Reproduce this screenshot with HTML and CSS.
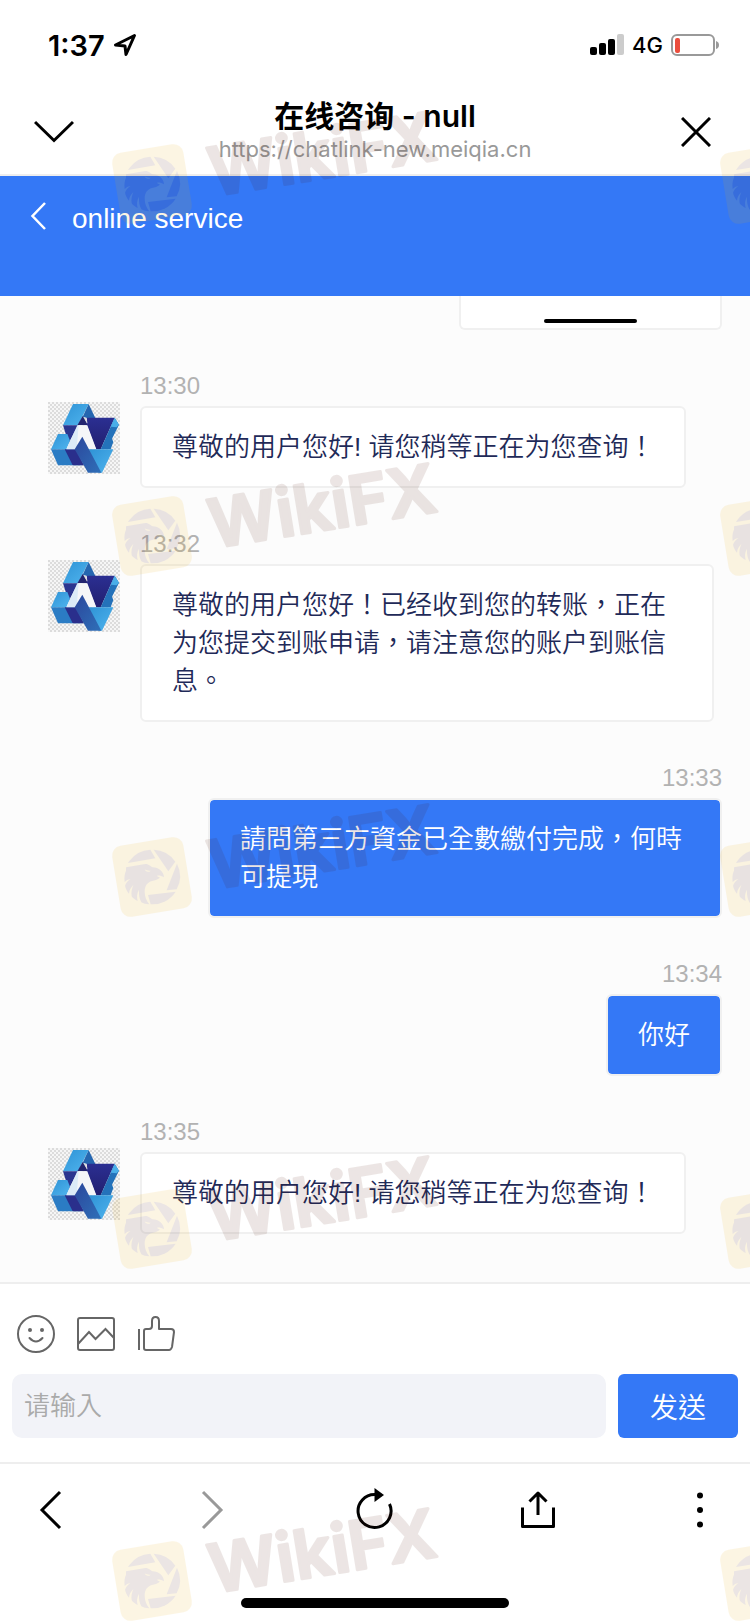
FILE: index.html
```
<!DOCTYPE html>
<html lang="zh-TW">
<head>
    <meta charset="UTF-8">
    <meta name="viewport" content="width=device-width, initial-scale=1.0">
    <title>在线咨询 - null</title>
    <link rel="stylesheet" href="styles.css">
</head>
<body>
    <!-- shared drawings -->
    <svg class="defs" width="0" height="0" aria-hidden="true">
        <defs>
            <pattern id="checker" width="12" height="12" patternUnits="userSpaceOnUse">
                <rect width="12" height="12" fill="#f6f6f6"/>
                <path d="M0 0h6v6H0zM6 6h6v6H6z" fill="#dcdcdc"/>
            </pattern>
            <linearGradient id="sky" x1="0" y1="0" x2="1" y2="1">
                <stop offset="0" stop-color="#2f93d6"/>
                <stop offset="1" stop-color="#4fb4ee"/>
            </linearGradient>
            <linearGradient id="navy" x1="0" y1="0" x2="0" y2="1">
                <stop offset="0" stop-color="#2b2f92"/>
                <stop offset="1" stop-color="#221f70"/>
            </linearGradient>
            <linearGradient id="royal" x1="0" y1="0" x2="1" y2="1">
                <stop offset="0" stop-color="#2b479c"/>
                <stop offset="1" stop-color="#2f6fb8"/>
            </linearGradient>
        </defs>
        <symbol id="avatar" viewBox="0 0 216 216">
            <rect width="216" height="216" fill="url(#checker)"/>
            <path d="M75 6h47L90 70H45z" fill="url(#sky)"/>
            <path d="M122 6l20 42h-24l-14-4z" fill="#2566b0"/>
            <path d="M104 42l16 28H88z" fill="#23246f"/>
            <path d="M116 47h84l-42 95h-14l-28-72 2-8z" fill="url(#navy)"/>
            <path d="M200 47l13 21-21 42 4 10-8 22h-30z" fill="#2472ba"/>
            <path d="M200 47l13 21-7 8-18-2z" fill="#4aaee8"/>
            <path d="M45 70h45l-28 54z" fill="#2b358f"/>
            <path d="M30 96h28l8 20-11 26H9z" fill="url(#sky)"/>
            <path d="M9 142h70l24 48H30z" fill="#2b7cc4"/>
            <path d="M50 142h34l24 48H74z" fill="#2a2f8c"/>
            <path d="M88 70h16l4 30-28 42H55z" fill="#dcebf7"/>
            <path d="M92 70h26l27 72h-24l-18-38-16 24z" fill="#f5f6f8"/>
            <path d="M122 142h74l-34 70h-10z" fill="url(#sky)"/>
            <path d="M103 104l57 108h-40L80 142z" fill="url(#royal)"/>
        </symbol>
        <symbol id="eagle" viewBox="0 0 72 72" overflow="visible">
            <g opacity=".11">
                <rect width="72" height="72" rx="10" fill="#ecad0a" transform="rotate(-9.3 36 36)"/>
                <g transform="translate(36 36) scale(.333) translate(-132 -136)" fill="#501e14">
                    <path d="M64 88A83 83 0 0 1 127 54l15 26-82 14z"/>
                    <path d="M137 54A83 83 0 0 1 202 90l-21 29z"/>
                    <path d="M207 96a83 83 0 0 1-1 77l-30 3z"/>
                    <path d="M120 190l83-10a83 83 0 0 1-75 38z"/>
                    <path d="M54 107l58-10c12 0 16 8 22 10 18 0 34 14 34 30-10-7-24-6-20-3l8 4c-8 6-16 8-24 10-14 4-22 14-22 32 0 16 6 28 14 38-10 0-18-2-24-6-6-12-8-22-7-38-7 12-7 22-4 34-8-4-14-8-18-14-2-12 0-22 5-34-9 9-12 16-13 26-7-8-10-15-12-24 3-8 8-14 16-20-8 2-12 4-17 9-2-14 0-26 4-34zM110 113c2 8 12 10 18 4-6 1-12 0-18-4z" fill-rule="evenodd"/>
                </g>
            </g>
        </symbol>
    </svg>

    <header class="top">
        <div class="status">
            <div class="status-left">
                <span class="clock">1:37</span>
                <svg width="24" height="24" viewBox="0 0 24 24" fill="none" stroke="#000" stroke-width="3" stroke-linejoin="round"><path d="M21.500 2.500L2.500 12l9.500 1 1 8.500z"/></svg>
            </div>
            <div class="status-right">
                <svg width="34" height="22" viewBox="0 0 34 22">
                    <rect x="0" y="13" width="7" height="8" rx="2"/>
                    <rect x="9" y="9" width="7" height="12" rx="2"/>
                    <rect x="18" y="5" width="7" height="16" rx="2"/>
                    <rect x="27" y="0" width="7" height="21" rx="2" fill="#ccc"/>
                </svg>
                <span class="network">4G</span>
                <svg width="48" height="24" viewBox="0 0 48 24">
                    <rect x="1" y="2" width="42" height="20" rx="5" fill="none" stroke="#999" stroke-width="2"/>
                    <rect x="4" y="5" width="5" height="15" rx="2" fill="#eb4d3d"/>
                    <path d="M45 8v8q3-1 3-4t-3-4z" fill="#999"/>
                </svg>
            </div>
        </div>
        <div class="titlebar">
            <button class="icon-btn" aria-label="Collapse">
                <svg width="40" height="24" viewBox="0 0 40 24" fill="none" stroke="#000" stroke-width="3"><path d="M1 2l19 18.500L39 2"/></svg>
            </button>
            <div class="titles">
                <h1 lang="zh-CN">在线咨询 - null</h1>
                <p>https://chatlink-new.meiqia.cn</p>
            </div>
            <button class="icon-btn" aria-label="Close">
                <svg width="30" height="30" viewBox="0 0 30 30" fill="none" stroke="#000" stroke-width="3"><path d="M1 1l28 28M29 1L1 29"/></svg>
            </button>
        </div>
    </header>

    <div class="service">
        <a href="#back" aria-label="Back">
            <svg width="16" height="28" viewBox="0 0 16 28" fill="none" stroke="#fff" stroke-width="2.500"><path d="M15 1L2.500 14 15 27"/></svg>
        </a>
        <h2>online service</h2>
    </div>

    <main class="chat">
        <div class="photo"><span></span></div>

        <section class="message">
            <time>13:30</time>
            <div class="row">
                <svg class="avatar"><use href="#avatar"/></svg>
                <p class="bubble">尊敬的用户您好! 请您稍等正在为您查询！</p>
            </div>
        </section>
        <section class="message">
            <time>13:32</time>
            <div class="row">
                <svg class="avatar"><use href="#avatar"/></svg>
                <p class="bubble">尊敬的用户您好！已经收到您的转账，正在为您提交到账申请，请注意您的账户到账信息。</p>
            </div>
        </section>
        <section class="message mine">
            <time>13:33</time>
            <div class="row">
                <p class="bubble">請問第三方資金已全數繳付完成，何時可提現</p>
            </div>
        </section>
        <section class="message mine">
            <time>13:34</time>
            <div class="row">
                <p class="bubble">你好</p>
            </div>
        </section>
        <section class="message">
            <time>13:35</time>
            <div class="row">
                <svg class="avatar"><use href="#avatar"/></svg>
                <p class="bubble">尊敬的用户您好! 请您稍等正在为您查询！</p>
            </div>
        </section>
    </main>

    <form class="composer">
        <div class="tools">
            <button type="button" aria-label="Emoji">
                <svg width="40" height="40" viewBox="0 0 40 40" fill="none" stroke="#666" stroke-width="2">
                    <circle cx="20" cy="20" r="18"/>
                    <path d="M13.500 24q6.500 7 13 0" stroke-linecap="round"/>
                    <circle cx="14" cy="16" r="2" fill="#666" stroke="none"/>
                    <circle cx="26" cy="16" r="2" fill="#666" stroke="none"/>
                </svg>
            </button>
            <button type="button" aria-label="Picture">
                <svg width="40" height="40" viewBox="0 0 40 40" fill="none" stroke="#666" stroke-width="2">
                    <rect x="2" y="4" width="36" height="32" rx="2"/>
                    <path d="M2 30l11-12 6.500 7L29.500 15l8.500 9"/>
                </svg>
            </button>
            <button type="button" aria-label="Like">
                <svg width="40" height="40" viewBox="0 0 40 40" fill="none" stroke="#666" stroke-width="2" stroke-linejoin="round">
                    <path d="M3 15v21"/>
                    <path d="M8 34V17q0-2 2-2h3q3 0 3-3V7q0-4 3.500-4T23 7v8h12q3 0 3 3l-2 15q-1 3-3 3H10q-2 0-2-2z"/>
                </svg>
            </button>
        </div>
        <div class="entry">
            <input type="text" placeholder="请输入" aria-label="请输入">
            <button type="submit" class="send">发送</button>
        </div>
    </form>

    <nav class="toolbar">
        <div class="toolbar-buttons">
            <button aria-label="Back"><svg width="40" height="40" viewBox="0 0 40 40" fill="none" stroke="#000" stroke-width="3"><path d="M30 2L12 20l18 18"/></svg></button>
            <button aria-label="Forward"><svg width="40" height="40" viewBox="0 0 40 40" fill="none" stroke="#999" stroke-width="3"><path d="M10 2l18 18-18 18"/></svg></button>
            <button aria-label="Reload"><svg width="40" height="40" viewBox="0 0 40 40" fill="none" stroke="#000" stroke-width="3"><path d="M20 4.500A16.500 16.500 0 1 0 34.500 14"/><path d="M19.500-2l9.500 7L19.500 12z" fill="#000" stroke="none"/></svg></button>
            <button aria-label="Share"><svg width="40" height="40" viewBox="0 0 40 40" fill="none" stroke="#000" stroke-width="3"><path d="M4.500 17.500v19h31v-19M20 25V3M11.500 11.500L20 3l8.500 8.500" stroke-linejoin="round"/></svg></button>
            <button aria-label="More"><svg width="40" height="40" viewBox="0 0 40 40"><circle cx="20" cy="5.500" r="3"/><circle cx="20" cy="20" r="3"/><circle cx="20" cy="34.500" r="3"/></svg></button>
        </div>
        <div class="home-bar"></div>
    </nav>

    <!-- watermark layer, two marks on each line -->
    <div class="watermarks" aria-hidden="true">
        <svg class="mark m1"><use href="#eagle" width="72" height="72"/><text x="94" y="58" transform="rotate(-9.3 36 36)">WikiFX</text></svg>
        <svg class="mark m2"><use href="#eagle" width="72" height="72"/><text x="94" y="58" transform="rotate(-9.3 36 36)">WikiFX</text></svg>
        <svg class="mark m3"><use href="#eagle" width="72" height="72"/><text x="94" y="58" transform="rotate(-9.3 36 36)">WikiFX</text></svg>
        <svg class="mark m4"><use href="#eagle" width="72" height="72"/><text x="94" y="58" transform="rotate(-9.3 36 36)">WikiFX</text></svg>
        <svg class="mark m5"><use href="#eagle" width="72" height="72"/><text x="94" y="58" transform="rotate(-9.3 36 36)">WikiFX</text></svg>
        <svg class="mark next m1"><use href="#eagle" width="72" height="72"/></svg>
        <svg class="mark next m2"><use href="#eagle" width="72" height="72"/></svg>
        <svg class="mark next m3"><use href="#eagle" width="72" height="72"/></svg>
        <svg class="mark next m4"><use href="#eagle" width="72" height="72"/></svg>
        <svg class="mark next m5"><use href="#eagle" width="72" height="72"/></svg>
    </div>
</body>
</html>
```
FILE: styles.css
```
* {
    margin: 0;
    padding: 0;
    box-sizing: border-box;
}

body {
    position: relative;
    min-height: 100vh;
    display: flex;
    flex-direction: column;
    overflow-x: hidden;
    background: #fff;
    font-family: "Liberation Sans", "Noto Sans CJK TC", sans-serif;
}

button {
    border: none;
    background: none;
    font-family: inherit;
    cursor: pointer;
}

svg {
    display: block;
}

.defs {
    position: absolute;
}

/* status bar and title */
.top {
    border-bottom: 2px solid #eee;
    font-family: Inter, "Noto Sans CJK SC", sans-serif;
}

.status {
    height: 90px;
    padding: 0 31px 0 48px;
    display: flex;
    justify-content: space-between;
    align-items: center;
}

.status-left,
.status-right {
    display: flex;
    align-items: center;
    gap: 8px;
}

.clock {
    font-size: 29px;
    font-weight: 600;
}

.network {
    font-size: 22px;
    font-weight: 500;
}

.titlebar {
    height: 84px;
    padding: 0 34px;
    display: flex;
    justify-content: space-between;
    align-items: center;
}

.icon-btn {
    width: 40px;
    display: flex;
    justify-content: center;
}

.titles {
    text-align: center;
}

.titles h1 {
    font-size: 30px;
    font-weight: 600;
    line-height: 38px;
}

.titles p {
    padding-bottom: 4px;
    font-size: 22px;
    line-height: 28px;
    color: #999;
}

.service {
    height: 120px;
    padding: 26px 30px;
    display: flex;
    gap: 26px;
    background: #3478f6;
    color: #fff;
}

.service h2 {
    font-size: 28px;
    font-weight: 400;
    line-height: 34px;
}

/* conversation */
.chat {
    flex: 1;
    padding: 0 28px 48px 48px;
    display: flex;
    flex-direction: column;
    gap: 40px;
    background: #fcfcfc;
}

.photo {
    align-self: flex-end;
    width: 263px;
    height: 34px;
    padding: 0 12px 5px;
    display: flex;
    justify-content: center;
    align-items: flex-end;
    border: 2px solid #f0f0f0;
    border-top: none;
    border-radius: 0 0 6px 6px;
    background: #fff;
}

.photo span {
    width: 93px;
    height: 4px;
    border-radius: 2px;
    background: #000;
}

.message time {
    display: block;
    height: 32px;
    padding-left: 92px;
    font-size: 24px;
    line-height: 32px;
    color: #b2b2b2;
}

.row {
    display: flex;
    align-items: flex-start;
    gap: 20px;
}

.avatar {
    flex: none;
    width: 72px;
    height: 72px;
}

.bubble {
    max-width: 574px;
    margin-top: 4px;
    padding: 20px 30px;
    border: 2px solid #f0f0f0;
    border-radius: 6px;
    background: #fff;
    font-size: 26px;
    font-weight: 350;
    line-height: 38px;
    color: #1f2a58;
}

.mine time {
    text-align: right;
}

.mine .row {
    justify-content: flex-end;
}

.mine .bubble {
    max-width: 514px;
    background: #3478f6;
    background-clip: padding-box;
    color: #fff;
}

/* input area */
.composer {
    padding: 30px 12px 24px;
    border-top: 2px solid #eee;
    border-bottom: 2px solid #eee;
}

.tools {
    display: flex;
    gap: 20px;
    padding: 0 4px;
}

.entry {
    display: flex;
    gap: 12px;
    margin-top: 20px;
}

.entry input {
    flex: 1;
    min-width: 0;
    height: 64px;
    padding: 0 12px;
    border: none;
    border-radius: 10px;
    background: #f2f3f8;
    font-family: inherit;
    font-size: 26px;
    font-weight: 350;
}

.entry input::placeholder {
    color: #aaa;
}

.send {
    width: 120px;
    border-radius: 6px;
    background: #3478f6;
    color: #fff;
    font-size: 28px;
    font-weight: 350;
}

/* browser toolbar */
.toolbar {
    height: 160px;
    padding: 26px 30px 16px;
    display: flex;
    flex-direction: column;
    justify-content: space-between;
    align-items: center;
}

.toolbar-buttons {
    width: 100%;
    display: flex;
    justify-content: space-between;
}

.toolbar-buttons svg {
    overflow: visible;
}

.home-bar {
    width: 268px;
    height: 10px;
    border-radius: 5px;
    background: #000;
}

/* watermark */
.watermarks {
    position: absolute;
    inset: 0;
    overflow: hidden;
    pointer-events: none;
}

.mark {
    position: absolute;
    left: 116px;
    width: 330px;
    height: 72px;
    overflow: visible;
}

.mark.next {
    left: 724px;
    width: 72px;
}

.mark text {
    font-family: Inter, sans-serif;
    font-size: 67px;
    font-weight: 600;
    fill: #4b0f00;
    stroke: #4b0f00;
    stroke-width: 3px;
    stroke-linejoin: round;
    opacity: 0.1;
}

.m1 { top: 148px; }
.m2 { top: 500px; }
.m3 { top: 841px; }
.m4 { top: 1193px; }
.m5 { top: 1545px; }
```
